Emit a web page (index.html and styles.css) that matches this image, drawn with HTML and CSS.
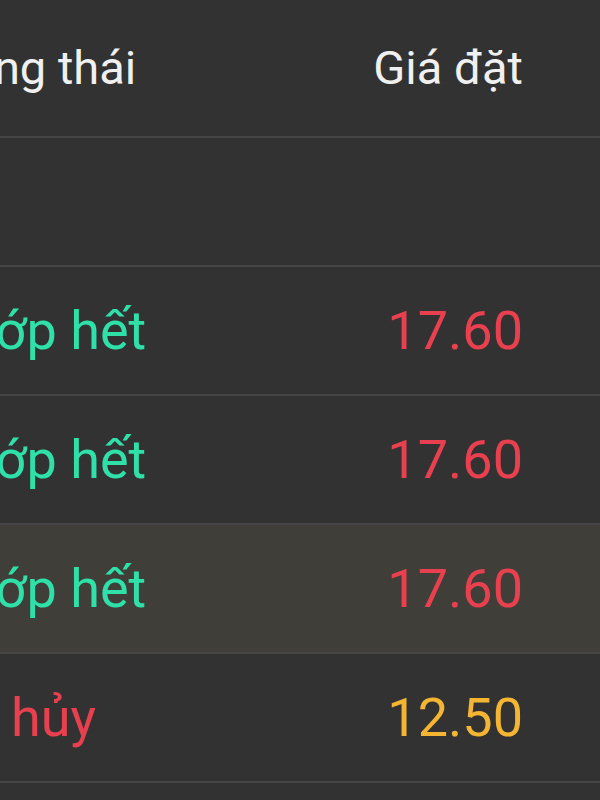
FILE: index.html
```html
<!DOCTYPE html>
<html lang="vi">
<head>
    <meta charset="UTF-8">
    <meta name="viewport" content="width=device-width, initial-scale=1.0">
    <title>Sổ lệnh</title>
    <link rel="stylesheet" href="styles.css">
</head>
<body>
    <div class="order-table">
        <div class="order-row header-row">
            <div class="cell status">Trạng thái</div>
            <div class="cell price">Giá đặt</div>
        </div>
        <div class="order-row empty-row">
            <div class="cell status"></div>
            <div class="cell price"></div>
        </div>
        <div class="order-row">
            <div class="cell status matched">Khớp hết</div>
            <div class="cell price down">17.60</div>
        </div>
        <div class="order-row">
            <div class="cell status matched">Khớp hết</div>
            <div class="cell price down">17.60</div>
        </div>
        <div class="order-row active">
            <div class="cell status matched">Khớp hết</div>
            <div class="cell price down">17.60</div>
        </div>
        <div class="order-row">
            <div class="cell status cancelled">Đã hủy</div>
            <div class="cell price ref">12.50</div>
        </div>
        <div class="order-row">
            <div class="cell status"></div>
            <div class="cell price"></div>
        </div>
    </div>
</body>
</html>
```

FILE: styles.css
```css
* {
    margin: 0;
    padding: 0;
    box-sizing: border-box;
    font-family: Roboto, 'Noto Sans', sans-serif;
}

body {
    background-color: #323232;
    width: 600px;
    height: 800px;
    overflow: hidden;
}

.order-table {
    margin-left: -68px;
}

.order-row {
    display: flex;
    align-items: center;
    justify-content: space-between;
    height: 129px;
    border-bottom: 2px solid #464646;
    padding-right: 77px;
}

.header-row {
    height: 138px;
    padding-bottom: 2px;
}

.header-row .cell {
    color: #f0f0f0;
    font-size: 47px;
}

.header-row .status {
    margin-left: -5px;
}

.cell {
    font-size: 54px;
    white-space: nowrap;
}

.order-row.active {
    background-color: #3f3e38;
}

.matched {
    color: #2fe0a9;
}

.cancelled {
    color: #e8404f;
}

.down {
    color: #e8404f;
}

.ref {
    color: #f4b632;
}
```
